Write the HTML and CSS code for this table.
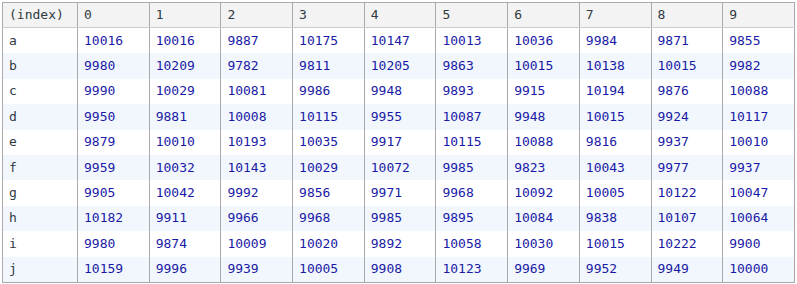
FILE: index.html
```html
<!DOCTYPE html>
<html>
<head>
<meta charset="utf-8">
<link rel="stylesheet" href="styles.css">
</head>
<body>
<div class="wrap">
<table class="grid">
<colgroup><col class="c-idx"><col><col><col><col><col><col><col><col><col><col></colgroup>
<thead>
<tr><th>(index)</th><th>0</th><th>1</th><th>2</th><th>3</th><th>4</th><th>5</th><th>6</th><th>7</th><th>8</th><th>9</th></tr>
</thead>
<tbody>
<tr><td class="idx">a</td><td>10016</td><td>10016</td><td>9887</td><td>10175</td><td>10147</td><td>10013</td><td>10036</td><td>9984</td><td>9871</td><td>9855</td></tr>
<tr><td class="idx">b</td><td>9980</td><td>10209</td><td>9782</td><td>9811</td><td>10205</td><td>9863</td><td>10015</td><td>10138</td><td>10015</td><td>9982</td></tr>
<tr><td class="idx">c</td><td>9990</td><td>10029</td><td>10081</td><td>9986</td><td>9948</td><td>9893</td><td>9915</td><td>10194</td><td>9876</td><td>10088</td></tr>
<tr><td class="idx">d</td><td>9950</td><td>9881</td><td>10008</td><td>10115</td><td>9955</td><td>10087</td><td>9948</td><td>10015</td><td>9924</td><td>10117</td></tr>
<tr><td class="idx">e</td><td>9879</td><td>10010</td><td>10193</td><td>10035</td><td>9917</td><td>10115</td><td>10088</td><td>9816</td><td>9937</td><td>10010</td></tr>
<tr><td class="idx">f</td><td>9959</td><td>10032</td><td>10143</td><td>10029</td><td>10072</td><td>9985</td><td>9823</td><td>10043</td><td>9977</td><td>9937</td></tr>
<tr><td class="idx">g</td><td>9905</td><td>10042</td><td>9992</td><td>9856</td><td>9971</td><td>9968</td><td>10092</td><td>10005</td><td>10122</td><td>10047</td></tr>
<tr><td class="idx">h</td><td>10182</td><td>9911</td><td>9966</td><td>9968</td><td>9985</td><td>9895</td><td>10084</td><td>9838</td><td>10107</td><td>10064</td></tr>
<tr><td class="idx">i</td><td>9980</td><td>9874</td><td>10009</td><td>10020</td><td>9892</td><td>10058</td><td>10030</td><td>10015</td><td>10222</td><td>9900</td></tr>
<tr><td class="idx">j</td><td>10159</td><td>9996</td><td>9939</td><td>10005</td><td>9908</td><td>10123</td><td>9969</td><td>9952</td><td>9949</td><td>10000</td></tr>
</tbody>
</table>
</div>
</body>
</html>
```
FILE: styles.css
```css
html, body {
  margin: 0;
  padding: 0;
  background: #ffffff;
}
.wrap {
  padding: 2px 0 0 2px;
}
.grid {
  border-collapse: collapse;
  table-layout: fixed;
  width: 793px;
  border: 1px solid #aaaaaa;
  font-family: "DejaVu Sans Mono", "Liberation Mono", monospace;
  font-size: 13px;
}
.c-idx {
  width: 75px;
}
.grid th,
.grid td {
  padding: 0 6px;
  text-align: left;
  white-space: nowrap;
  overflow: hidden;
  border-left: 1px solid #aaaaaa;
  line-height: 16px;
}
.grid th {
  height: 24px;
  font-weight: normal;
  color: #303942;
  background: #f3f3f3;
  border-bottom: 1px solid #cdcdcd;
}
.grid td {
  height: 25.4px;
  color: #1a1aa6;
}
.grid td.idx {
  color: #303942;
}
.grid tbody tr:nth-child(even) td {
  background: #f2f7fd;
}
```
